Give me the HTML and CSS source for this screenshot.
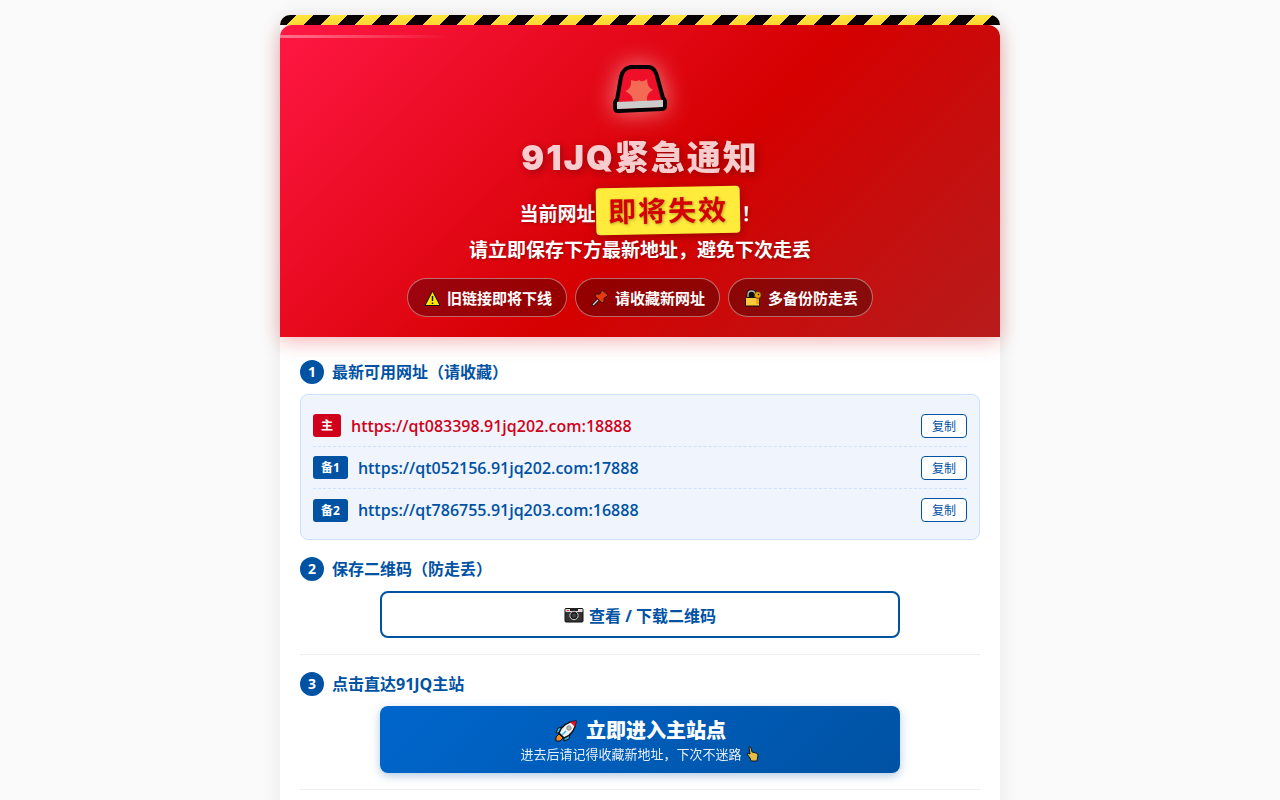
FILE: index.html
```html
<!DOCTYPE html>
<html lang="zh-CN">
<head>
    <meta charset="UTF-8">
    <meta name="viewport" content="width=device-width, initial-scale=1.0">
    <title>91JQ紧急通知</title>
    <link rel="stylesheet" href="styles.css">
</head>
<body>
    <div class="container">
        <div class="stripes"></div>
        <header class="alert-header">
            <svg class="siren" viewBox="0 0 54 48" aria-hidden="true">
                <path d="M4 35 L8 12 Q10 3 18 2 L36 2 Q42 3 44 11 L50 33 Q53 36 52 41 Q52 44 48 44 L5 46 Q2 46 2 42 Q1 36 4 35Z" fill="#ee1028" stroke="#000" stroke-width="4" stroke-linejoin="round"/>
                <path d="M20 36 Q20 30 12 26 Q19 24 18 15 Q24 17 26 15 Q29 18 34 14 Q34 22 40 25 Q33 28 34 36Z" fill="#f46a55"/>
                <path d="M4 37 L50 35 L50 42 L4 44Z" fill="#ccc"/>
            </svg>
            <h1>91JQ紧急通知</h1>
            <p class="subtitle">当前网址<span class="highlight">即将失效</span>！<br>请立即保存下方最新地址，避免下次走丢</p>
            <div class="pills">
                <span class="pill">
                    <svg viewBox="0 0 20 20" aria-hidden="true">
                        <path d="M10.500 3 L18 17.500 H3Z" fill="#ffe600" stroke="#111" stroke-linejoin="round"/>
                        <path d="M10.500 8v5M10.500 14.500v1.500" stroke="#111" stroke-width="1.500"/>
                    </svg>旧链接即将下线
                </span>
                <span class="pill">
                    <svg viewBox="0 0 20 20" aria-hidden="true">
                        <path d="M8 12 L2.500 17.500" stroke="#111" stroke-width="3"/>
                        <path d="M8 12 L3 17" stroke="#ccc" stroke-width="1.500"/>
                        <path d="M12 2 L18 7 L16 9 L14 10 L14 14 L12 15 L5 8 L6 6 L10 6 L11 4Z" fill="#e8380d" stroke="#111" stroke-width=".8"/>
                    </svg>请收藏新网址
                </span>
                <span class="pill">
                    <svg viewBox="0 0 20 20" aria-hidden="true">
                        <path d="M5 10V6.500Q5 3 8.500 3T12 6.500V10" fill="#111" stroke="#111" stroke-width="3"/>
                        <path d="M5 10V6.500Q5 3 8.500 3T12 6.500V10" fill="none" stroke="#bbb" stroke-width="1.300"/>
                        <rect x="2.500" y="9.500" width="14" height="8.500" rx="1" fill="#ffc83d" stroke="#111"/>
                        <path d="M14.500 9V16" stroke="#f0a500" stroke-width="2.500"/>
                        <circle cx="14.800" cy="7" r="3.400" fill="#f0a500" stroke="#111" stroke-width=".6"/>
                        <circle cx="15.500" cy="6.500" r=".8" fill="#111"/>
                    </svg>多备份防走丢
                </span>
            </div>
        </header>

        <main>
            <section>
                <h2><span class="num">1</span>最新可用网址（请收藏）</h2>
                <ul class="url-box">
                    <li>
                        <span class="tag tag-main">主</span>
                        <a class="url-main" href="https://qt083398.91jq202.com:18888">https://qt083398.91jq202.com:18888</a>
                        <button class="copy-btn">复制</button>
                    </li>
                    <li>
                        <span class="tag">备1</span>
                        <a href="https://qt052156.91jq202.com:17888">https://qt052156.91jq202.com:17888</a>
                        <button class="copy-btn">复制</button>
                    </li>
                    <li>
                        <span class="tag">备2</span>
                        <a href="https://qt786755.91jq203.com:16888">https://qt786755.91jq203.com:16888</a>
                        <button class="copy-btn">复制</button>
                    </li>
                </ul>
            </section>

            <section class="divided">
                <h2><span class="num">2</span>保存二维码（防走丢）</h2>
                <button class="qr-btn">
                    <svg viewBox="0 0 20 16" aria-hidden="true">
                        <rect x="1" y="1.500" width="18" height="13.500" rx="1" fill="#333" stroke="#111"/>
                        <path d="M1.500 2H18.500V5H1.500Z" fill="#ddd"/>
                        <path d="M6 1H14V4H6Z" fill="#222"/>
                        <circle cx="10" cy="8.500" r="4.200" fill="#222" stroke="#ccc"/>
                        <circle cx="10" cy="8.500" r="2" fill="#444"/>
                        <path d="M2.500 3.500H5" stroke="#e44"/>
                    </svg>查看 / 下载二维码
                </button>
            </section>

            <section class="divided">
                <h2><span class="num">3</span>点击直达91JQ主站</h2>
                <a class="enter-btn" href="https://qt083398.91jq202.com:18888">
                    <span class="enter-title">
                        <svg viewBox="0 0 24 24" aria-hidden="true">
                            <path d="M8 8 L4 9 L2 14 L6 14Z M16 16 L15 20 L10 22 L10 18Z" fill="#35b6ee" stroke="#111" stroke-linejoin="round"/>
                            <path d="M5 15 L2 18 L2 22 L6 22 L9 19Z" fill="#ff8a1e" stroke="#111" stroke-linejoin="round"/>
                            <path d="M5 14 Q9 3 22 2 Q21 15 10 19Z" fill="#f2f2f2" stroke="#111" stroke-width="1.500" stroke-linejoin="round"/>
                            <path d="M16 3 L22 2 L21 8Z" fill="#e8112d"/>
                            <circle cx="15" cy="9" r="2.200" fill="#bbb" stroke="#888"/>
                            <path d="M8 16 L12 12" stroke="#35b6ee" stroke-width="1.500"/>
                        </svg>立即进入主站点
                    </span>
                    <span class="enter-sub">进去后请记得收藏新地址，下次不迷路
                        <svg viewBox="0 0 14 16" aria-hidden="true">
                            <path d="M3 1 Q5 0 5 2 L6 6 L10 7 Q12 7 12 9 L11 15 L5 15 L4 12 L1 8 Q1 6 4 8Z" fill="#ffc83d" stroke="#111" stroke-linejoin="round"/>
                        </svg>
                    </span>
                </a>
            </section>
        </main>
    </div>
</body>
</html>
```
FILE: styles.css
```css
:root {
    --blue: #0052a3;
    --red: #d0021b;
    --yellow: #ffeb3b;
    --line: #cce0ff;
}
* {
    box-sizing: border-box;
    margin: 0;
    padding: 0;
}
body {
    font-family: "Open Sans", "Noto Sans CJK SC", sans-serif;
    background: #fafafa;
    padding-top: 15px;
    overflow-x: hidden;
}
.container {
    max-width: 720px;
    margin: 0 auto;
    padding-bottom: 20px;
    background: #fff;
    border-radius: 12px 12px 0 0;
    box-shadow: 0 0 20px rgba(0, 0, 0, 0.08);
}
.stripes {
    height: 10px;
    border-radius: 12px 12px 0 0;
    background: repeating-linear-gradient(135deg, #000 0 12px, var(--yellow) 12px 24px);
}

/* header */
.alert-header {
    position: relative;
    padding: 40px 20px 20px;
    border-radius: 12px 12px 0 0;
    background: linear-gradient(135deg, #ff1744 0%, #d50000 55%, #b71c1c 100%);
    box-shadow: 0 4px 20px rgba(213, 0, 0, 0.3);
    color: #fff;
    text-align: center;
}
.alert-header::before {
    content: "";
    position: absolute;
    top: 10px;
    left: 0;
    width: 170px;
    height: 3px;
    background: linear-gradient(90deg, rgba(255, 255, 255, 0.4), transparent);
}
.siren {
    display: block;
    width: 54px;
    height: 48px;
    margin: 0 auto 20px;
    filter: drop-shadow(0 0 12px rgba(255, 255, 255, 0.5));
}
h1 {
    font-family: "Inter", "Noto Sans CJK SC", sans-serif;
    font-size: 34px;
    font-weight: 900;
    line-height: 50px;
    letter-spacing: 2px;
    opacity: 0.8;
    text-shadow: 2px 2px 8px rgba(0, 0, 0, 0.4);
}
.subtitle {
    margin: 4px 0 12px;
    font-size: 19px;
    font-weight: 700;
    line-height: 32px;
    text-shadow: 1px 1px 3px rgba(0, 0, 0, 0.3);
}
.highlight {
    display: inline-block;
    padding: 0 12px;
    margin: 0 1px;
    border-radius: 4px;
    background: var(--yellow);
    color: #d50000;
    font-size: 28px;
    font-weight: 700;
    line-height: 47px;
    letter-spacing: 2px;
    transform: rotate(-1deg);
    box-shadow: 0 2px 8px rgba(0, 0, 0, 0.3);
}
.pills {
    display: flex;
    flex-wrap: wrap;
    justify-content: center;
    gap: 8px;
}
.pill {
    display: flex;
    align-items: center;
    gap: 5px;
    height: 39px;
    padding: 0 14px;
    border: 1px solid rgba(255, 255, 255, 0.4);
    border-radius: 20px;
    background: rgba(0, 0, 0, 0.3);
    font-size: 15px;
    font-weight: 700;
}
.pill svg {
    width: 20px;
    height: 20px;
}

/* steps */
main {
    padding: 23px 20px 0;
}
section {
    margin-bottom: 17px;
}
.divided {
    padding-bottom: 16px;
    border-bottom: 1px solid #eee;
}
h2 {
    display: flex;
    align-items: center;
    gap: 8px;
    margin-bottom: 10px;
    color: var(--blue);
    font-size: 16px;
    font-weight: 700;
    line-height: 24px;
}
.num {
    width: 24px;
    border-radius: 50%;
    background: var(--blue);
    color: #fff;
    font-size: 14px;
    text-align: center;
}
.url-box {
    padding: 10px 12px 8px;
    border: 1px solid var(--line);
    border-radius: 8px;
    background: #f0f5fd;
    list-style: none;
}
.url-box li {
    display: flex;
    align-items: center;
    gap: 10px;
    height: 42px;
    border-bottom: 1px dashed var(--line);
}
.url-box li:last-child {
    border-bottom: none;
}
.url-box a {
    flex: 1;
    color: var(--blue);
    font-size: 16px;
    font-weight: 600;
    text-decoration: none;
}
.url-box .url-main {
    color: var(--red);
}
.tag {
    padding: 0 8px;
    border-radius: 3px;
    background: var(--blue);
    color: #fff;
    font-size: 12px;
    font-weight: 700;
    line-height: 23px;
}
.tag-main {
    background: var(--red);
}
button {
    background: #fff;
    color: var(--blue);
    font-family: inherit;
    cursor: pointer;
}
.copy-btn {
    height: 24px;
    padding: 0 10px;
    border: 1px solid var(--blue);
    border-radius: 4px;
    font-size: 12px;
}
.qr-btn,
.enter-btn {
    display: flex;
    align-items: center;
    justify-content: center;
    width: 100%;
    max-width: 520px;
    margin: 0 auto;
    border-radius: 8px;
}
.qr-btn {
    height: 47px;
    gap: 5px;
    border: 2px solid var(--blue);
    font-size: 16px;
    font-weight: 700;
}
.qr-btn svg {
    width: 20px;
    height: 16px;
}
.enter-btn {
    flex-direction: column;
    height: 67px;
    background: linear-gradient(135deg, #0066cc, #0052a3);
    box-shadow: 0 3px 10px rgba(0, 82, 163, 0.3);
    color: #fff;
    text-decoration: none;
}
.enter-title,
.enter-sub {
    display: flex;
    align-items: center;
}
.enter-title {
    gap: 8px;
    font-size: 20px;
    font-weight: 900;
    line-height: 28px;
}
.enter-title svg {
    width: 24px;
    height: 24px;
}
.enter-sub {
    gap: 4px;
    font-size: 13px;
    line-height: 18px;
    opacity: 0.9;
}
.enter-sub svg {
    width: 14px;
    height: 16px;
}
```
